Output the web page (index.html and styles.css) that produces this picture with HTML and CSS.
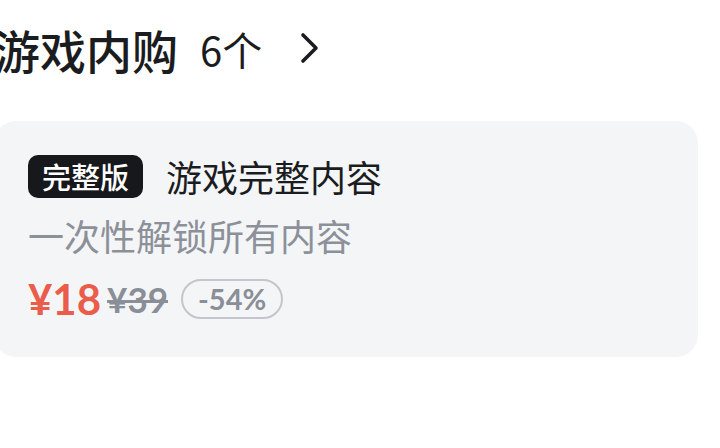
FILE: index.html
```html
<!DOCTYPE html>
<html lang="zh">
<head>
<meta charset="utf-8">
<link rel="stylesheet" href="styles.css">
</head>
<body>
<div class="page">
  <div class="header">
    <span class="title">游戏内购</span>
    <span class="count">6个</span>
    <svg class="chevron" width="20" height="32" viewBox="0 0 20 32"><path d="M3 3 L16 16 L3 29" fill="none" stroke="#1a1c20" stroke-width="3.6" stroke-linecap="round" stroke-linejoin="round"/></svg>
  </div>
  <div class="card">
    <div class="row-title">
      <span class="badge">完整版</span>
      <span class="name">游戏完整内容</span>
    </div>
    <div class="desc">一次性解锁所有内容</div>
    <div class="row-price">
      <span class="price">¥18</span>
      <span class="old">¥39</span>
      <span class="off">-54%</span>
    </div>
  </div>
</div>
</body>
</html>
```

FILE: styles.css
```css
html, body {
  margin: 0;
  padding: 0;
  background: #ffffff;
  font-family: "Noto Sans CJK SC", "Noto Sans", sans-serif;
  overflow: hidden;
}
.page {
  width: 704px;
  margin-left: -6px;
  padding-top: 20px;
}
.header {
  display: flex;
  align-items: center;
  height: 58px;
  color: #1a1c20;
}
.title {
  font-size: 46px;
  font-weight: 500;
  line-height: 58px;
}
.count {
  font-size: 40px;
  font-weight: 400;
  line-height: 58px;
  margin-left: 22px;
}
.chevron {
  margin-left: 38px;
  margin-top: -2px;
}
.card {
  margin-top: 43px;
  background: #f4f5f7;
  border-radius: 22px;
  padding: 34px 34px 38px;
}
.row-title {
  display: flex;
  align-items: center;
  height: 43px;
}
.badge {
  background: #16181c;
  color: #ffffff;
  font-size: 29px;
  font-weight: 500;
  height: 43px;
  line-height: 43px;
  padding: 0 14px;
  border-radius: 10px;
}
.name {
  font-size: 36px;
  font-weight: 400;
  color: #1a1c20;
  margin-left: 23px;
  line-height: 43px;
}
.desc {
  margin-top: 15px;
  font-size: 36px;
  line-height: 44px;
  color: #8c9099;
}
.row-price {
  display: flex;
  align-items: center;
  margin-top: 22px;
  height: 40px;
  font-family: "Lato", "Noto Sans", sans-serif;
  font-weight: 700;
}
.price {
  font-size: 42px;
  color: #ea5d4b;
  line-height: 40px;
}
.old {
  font-size: 35px;
  color: #8a8e96;
  text-decoration: line-through;
  text-decoration-thickness: 3px;
  margin-left: 6px;
  line-height: 40px;
}
.off {
  margin-left: 13px;
  height: 36px;
  line-height: 36px;
  padding: 0 15px;
  border: 2px solid #c3c6cc;
  border-radius: 20px;
  font-size: 29px;
  color: #8a8e96;
}
```
